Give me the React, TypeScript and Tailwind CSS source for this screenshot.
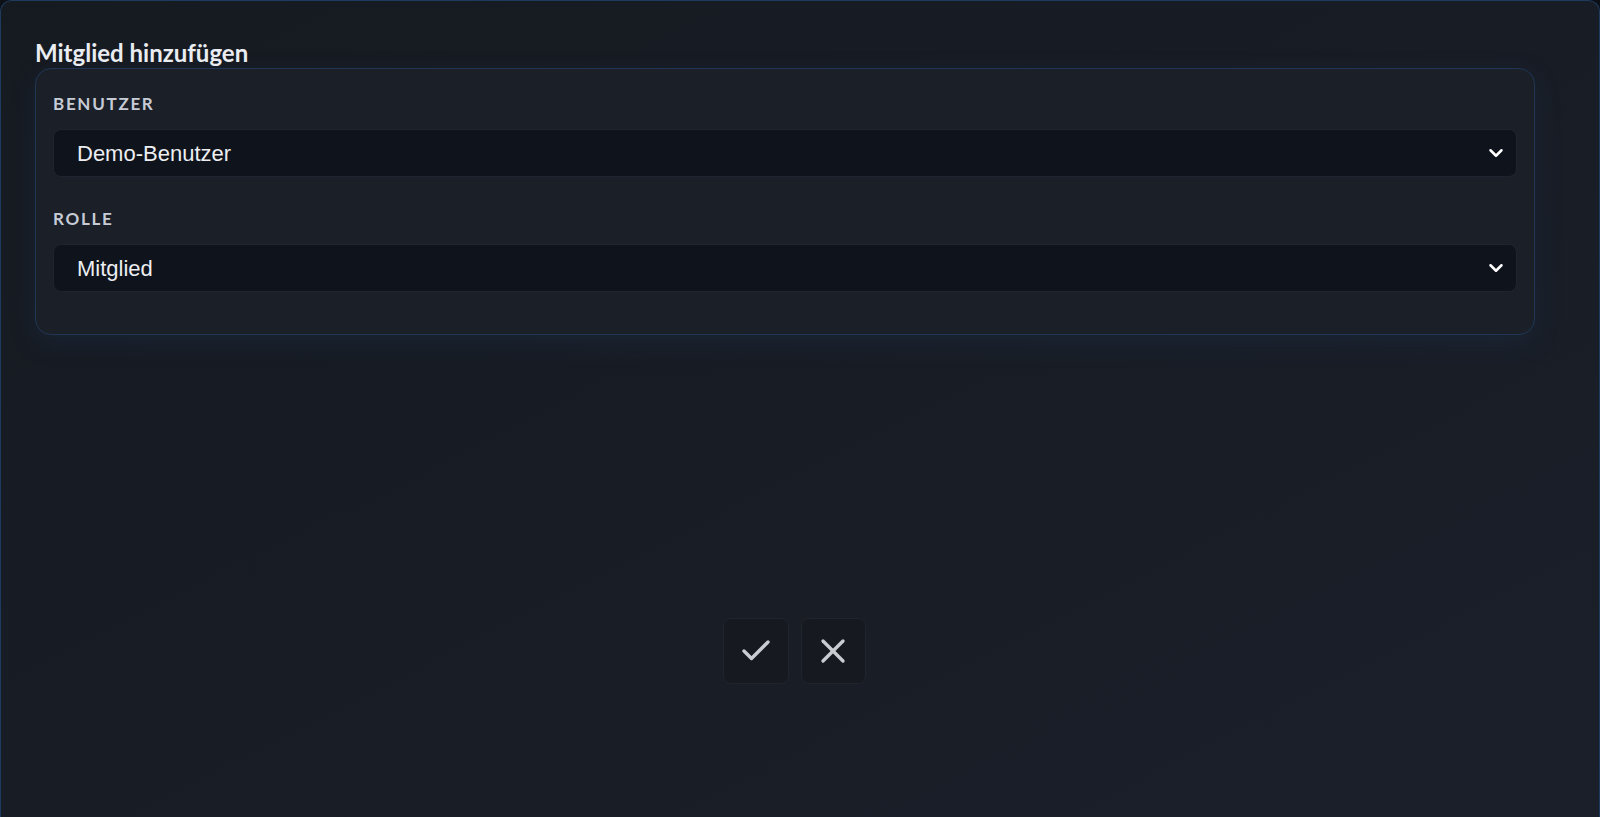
import { ChevronDown, Check, X } from 'lucide-react';

function SelectField({ label, value }: { label: string; value: string }) {
  return (
    <div>
      <div className="text-[17px] leading-6 font-bold tracking-[0.1em] text-[#c6ccd6] font-['Lato',sans-serif]">
        {label}
      </div>
      <div className="mt-[13px] h-12 flex items-center justify-between rounded-lg border border-[#1f2530] bg-[#0f131b] pl-[23px] pr-[9px]">
        <span className="text-[22px] text-[#eceef2] font-['Liberation_Sans',Arial,sans-serif]">{value}</span>
        <ChevronDown className="w-[22px] h-[22px] text-white" strokeWidth={2.75} />
      </div>
    </div>
  );
}

export default function App() {
  return (
    <div className="h-screen w-full bg-[#0d1016] overflow-hidden">
      <div className="h-full rounded-t-xl border border-b-0 border-[#1e3a5f] bg-gradient-to-br from-[#161a21] to-[#1a1f29] pl-[34px] pr-[64px] pt-[36px]">
        <h2 className="text-[24px] leading-[31px] font-bold text-[#e9ecf1] font-['Lato',sans-serif]">
          Mitglied hinzufügen
        </h2>
        <div className="rounded-2xl border border-[#1f3655] bg-[#1a1f28] px-[17px] pt-[23px] pb-[42px] shadow-[0_8px_24px_rgba(30,58,95,0.25)]">
          <SelectField label="BENUTZER" value="Demo-Benutzer" />
          <div className="mt-[30px]">
            <SelectField label="ROLLE" value="Mitglied" />
          </div>
        </div>
        <div className="mt-[283px] flex justify-center gap-3 pl-[18px]">
          <button
            type="button"
            className="w-[66px] h-[66px] flex items-center justify-center rounded-lg border border-[#20252d] bg-[#16191f] text-[#c9ccd1]"
            aria-label="Bestätigen"
          >
            <Check className="w-9 h-9" strokeWidth={2.25} />
          </button>
          <button
            type="button"
            className="w-[65px] h-[66px] flex items-center justify-center rounded-lg border border-[#20252d] bg-[#16191f] text-[#c9ccd1]"
            aria-label="Abbrechen"
          >
            <X className="w-10 h-10" strokeWidth={2} />
          </button>
        </div>
      </div>
    </div>
  );
}
